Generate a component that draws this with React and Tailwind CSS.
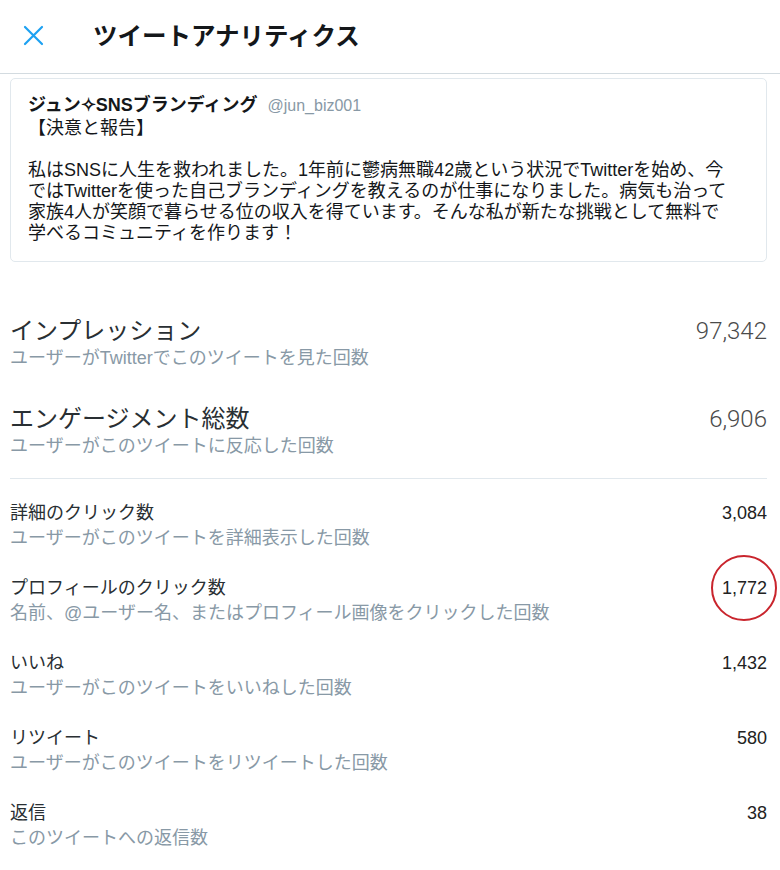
import React from "react";

const FONT = { fontFamily: "'Liberation Sans', 'Noto Sans CJK JP', sans-serif" };

function Big({ title, sub, value }) {
  return (
    <div className="flex justify-between items-start">
      <div>
        <div className="text-[24px] leading-[30px] text-[#292f33]">{title}</div>
        <div className="text-[18px] leading-[24px] text-[#8899a6]">{sub}</div>
      </div>
      <div
        className="text-[24px] leading-[30px] font-light text-[#4a4a4a]"
        style={{ fontFamily: "Roboto, 'Liberation Sans', sans-serif" }}
      >
        {value}
      </div>
    </div>
  );
}

function Small({ title, sub, value, circled }) {
  return (
    <div className="flex justify-between items-start">
      <div>
        <div className="text-[18px] leading-[26px] text-[#292f33]">{title}</div>
        <div className="text-[18px] leading-[24px] text-[#8899a6]">{sub}</div>
      </div>
      <div className="relative text-[18px] leading-[26px] text-[#222]">
        {value}
        {circled && (
          <span className="absolute left-1/2 top-1/2 -translate-x-1/2 -translate-y-1/2 w-[66px] h-[66px] rounded-full border-2 border-[#c9252d]" />
        )}
      </div>
    </div>
  );
}

export default function App() {
  return (
    <div className="w-[780px] h-[870px] bg-white overflow-hidden" style={FONT}>
      <div className="h-[74px] flex items-center border-b border-[#d3dbe0]">
        <svg className="ml-[23px] mt-[-2px]" width="21" height="21" viewBox="0 0 21 21">
          <path d="M2 2 L19 19 M19 2 L2 19" stroke="#1da1f2" strokeWidth="2.2" strokeLinecap="round" fill="none" />
        </svg>
        <div className="ml-[49px] text-[24.5px] font-bold text-[#14171a] leading-none mt-[2px]">
          ツイートアナリティクス
        </div>
      </div>

      <div className="pl-[10px] pr-[13px]">
        <div className="mt-[4px] border border-[#e1e8ed] rounded-[5px] px-[17px] pt-[14px] pb-[17px] text-[18px] text-[#14171a]">
          <div className="leading-[24px] whitespace-nowrap">
            <span className="font-bold">ジュン✧SNSブランディング</span>
            <span className="ml-[10px] text-[16px] text-[#8899a6]">@jun_biz001</span>
          </div>
          <div className="leading-[21px] whitespace-nowrap">
            <div>【決意と報告】</div>
            <div>&nbsp;</div>
            <div>私はSNSに人生を救われました。1年前に鬱病無職42歳という状況でTwitterを始め、今</div>
            <div>ではTwitterを使った自己ブランディングを教えるのが仕事になりました。病気も治って</div>
            <div>家族4人が笑顔で暮らせる位の収入を得ています。そんな私が新たな挑戦として無料で</div>
            <div>学べるコミュニティを作ります！</div>
          </div>
        </div>

        <div className="mt-[54px] flex flex-col gap-[34px] pb-[20px] border-b border-[#e1e8ed]">
          <Big title="インプレッション" sub="ユーザーがTwitterでこのツイートを見た回数" value="97,342" />
          <Big title="エンゲージメント総数" sub="ユーザーがこのツイートに反応した回数" value="6,906" />
        </div>

        <div className="pt-[21px] flex flex-col gap-[25px]">
          <Small title="詳細のクリック数" sub="ユーザーがこのツイートを詳細表示した回数" value="3,084" />
          <Small title="プロフィールのクリック数" sub="名前、@ユーザー名、またはプロフィール画像をクリックした回数" value="1,772" circled />
          <Small title="いいね" sub="ユーザーがこのツイートをいいねした回数" value="1,432" />
          <Small title="リツイート" sub="ユーザーがこのツイートをリツイートした回数" value="580" />
          <Small title="返信" sub="このツイートへの返信数" value="38" />
        </div>
      </div>
    </div>
  );
}
